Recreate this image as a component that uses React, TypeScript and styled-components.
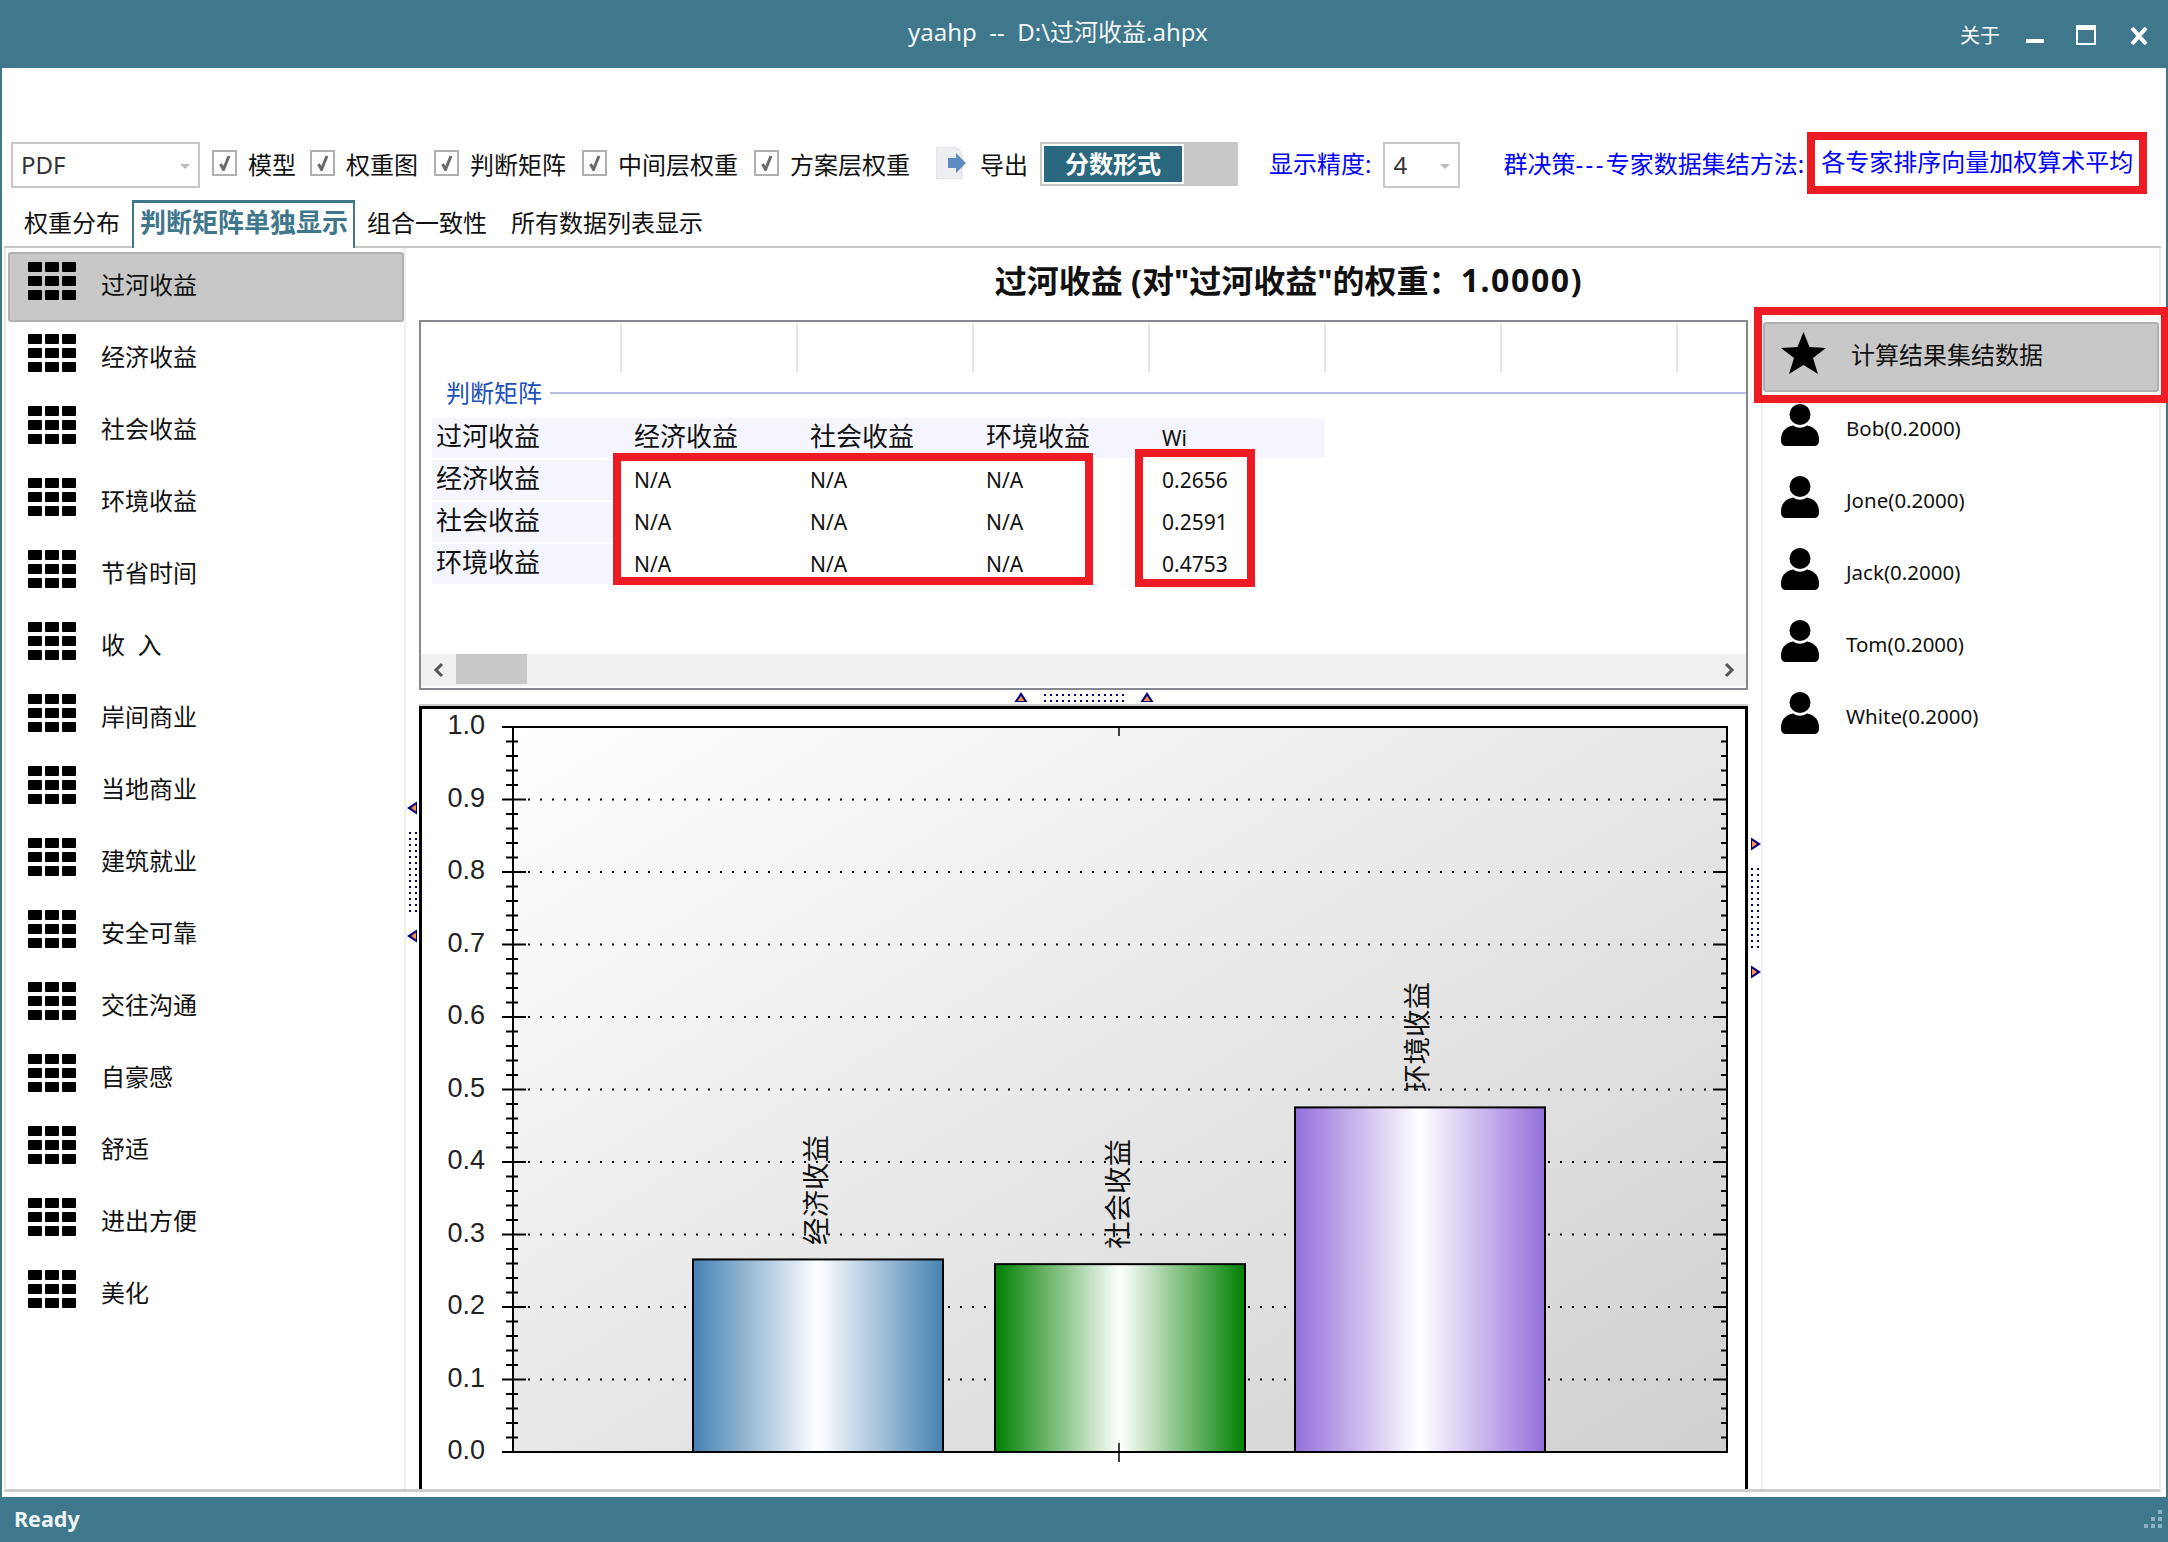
import styled, { createGlobalStyle } from "styled-components";

const TEAL = "#3f778c";
const RED = "#ed1c24";
const UI_FONT = `"Noto Sans", "Noto Sans CJK SC", sans-serif`;

const criteria = [
  "过河收益", "经济收益", "社会收益", "环境收益", "节省时间", "收  入", "岸间商业", "当地商业",
  "建筑就业", "安全可靠", "交往沟通", "自豪感", "舒适", "进出方便", "美化",
];
const experts = ["Bob(0.2000)", "Jone(0.2000)", "Jack(0.2000)", "Tom(0.2000)", "White(0.2000)"];
const matrix = [
  { name: "经济收益", wi: "0.2656" },
  { name: "社会收益", wi: "0.2591" },
  { name: "环境收益", wi: "0.4753" },
];
const checks = [
  { label: "模型", width: 98 },
  { label: "权重图", width: 124 },
  { label: "判断矩阵", width: 148 },
  { label: "中间层权重", width: 172 },
  { label: "方案层权重", width: 182 },
];
const bars = [
  { id: "blueBar", name: "经济收益", color: "#4682b4", x: 693, w: 250, value: 0.2656, labelX: 816, labelBottom: 1245 },
  { id: "greenBar", name: "社会收益", color: "#008000", x: 995, w: 250, value: 0.2591, labelX: 1118, labelBottom: 1249 },
  { id: "purpleBar", name: "环境收益", color: "#9370db", x: 1295, w: 250, value: 0.4753, labelX: 1417, labelBottom: 1092 },
];

const Y0 = 1452;
const yOf = (v: number) => Y0 - v * 725;

export default function App() {
  return (
    <Window>
      <GlobalStyle />
      <TitleBar>
        <TitleText>{"yaahp  --  D:\\过河收益.ahpx"}</TitleText>
        <WindowControls>
          <AboutLink>关于</AboutLink>
          <MinimizeGlyph />
          <MaximizeGlyph />
          <svg width="18" height="18" viewBox="0 0 18 18">
            <path d="M2 1 L16 17 M16 1 L2 17" stroke="#fff" strokeWidth="4" />
          </svg>
        </WindowControls>
      </TitleBar>

      <Body>
        <Toolbar>
          <Dropdown $width={189} $right={12}>
            PDF
            <DropArrow />
          </Dropdown>
          {checks.map((c) => (
            <CheckItem key={c.label} $width={c.width}>
              <CheckBox>
                <svg width="13" height="16" viewBox="0 0 13 16">
                  <path d="M2.5 9 L5.5 14.5 L11 1" fill="none" stroke="#6a6a6a" strokeWidth="3" />
                </svg>
              </CheckBox>
              {c.label}
            </CheckItem>
          ))}
          <ExportButton>
            <svg width="30" height="32" viewBox="0 0 30 32">
              <path d="M0 0 H20 L26 6 V32 H0 Z" fill="#eceef2" stroke="#dcdcdc" />
              <path d="M12 11 H20 V6 L30 16 L20 26 V21 H12 Z" fill="#5d8cc4" />
            </svg>
            导出
          </ExportButton>
          <ToggleTrack>
            <ToggleKnob>分数形式</ToggleKnob>
          </ToggleTrack>
          <BlueLabel $left={31}>显示精度:</BlueLabel>
          <Dropdown $width={77} $left={12}>
            4
            <DropArrow />
          </Dropdown>
          <BlueLabel $left={43}>
            群决策<Dashes>---</Dashes>专家数据集结方法:
          </BlueLabel>
          <MethodBox>各专家排序向量加权算术平均</MethodBox>
        </Toolbar>

        <TabBar>
          <Tab>权重分布</Tab>
          <ActiveTab>判断矩阵单独显示</ActiveTab>
          <Tab>组合一致性</Tab>
          <Tab>所有数据列表显示</Tab>
        </TabBar>

        <Panel>
          <Sidebar>
            {criteria.map((name, i) => (
              <NavRow key={name} $selected={i === 0} $inset={18}>
                <GridGlyph>
                  {Array.from({ length: 9 }).map((_, n) => (
                    <GridCell key={n} />
                  ))}
                </GridGlyph>
                <NavLabel $gap={25}>{name}</NavLabel>
              </NavRow>
            ))}
          </Sidebar>

          <SideSplitter>
            <Arrow dir="left" />
            <Grip rows={14} cols={2} />
            <Arrow dir="left" />
          </SideSplitter>

          <Main>
            <PanelTitle>
              过河收益 (对"过河收益"的权重：<WeightValue>1.0000)</WeightValue>
            </PanelTitle>
            <MainRow>
              <CenterColumn>
                <MatrixBox>
                  <HeaderStrip>
                    {Array.from({ length: 7 }).map((_, i) => (
                      <HeaderCell key={i} $first={i === 0} />
                    ))}
                  </HeaderStrip>
                  <SectionRow>
                    <SectionLabel>判断矩阵</SectionLabel>
                    <SectionRule />
                  </SectionRow>
                  <TableWrap>
                    <MatrixTable>
                      <HeadCell>过河收益</HeadCell>
                      {matrix.map((m) => (
                        <HeadCell key={m.name}>{m.name}</HeadCell>
                      ))}
                      <HeadCell $small>Wi</HeadCell>
                      {matrix.map((m) => (
                        <MatrixRow key={m.name}>
                          <RowHead>{m.name}</RowHead>
                          <ValueCell>N/A</ValueCell>
                          <ValueCell>N/A</ValueCell>
                          <ValueCell>N/A</ValueCell>
                          <ValueCell>{m.wi}</ValueCell>
                        </MatrixRow>
                      ))}
                    </MatrixTable>
                    <RedFrame $left={181} $top={35} $width={480} $height={132} />
                    <RedFrame $left={703} $top={31} $width={120} $height={138} />
                  </TableWrap>
                  <ScrollTrack>
                    <ScrollButton>
                      <svg width="12" height="16" viewBox="0 0 12 16">
                        <path d="M9 2 L3 8 L9 14" fill="none" stroke="#555" strokeWidth="3" />
                      </svg>
                    </ScrollButton>
                    <ScrollThumb />
                    <ScrollButton $end>
                      <svg width="12" height="16" viewBox="0 0 12 16">
                        <path d="M3 2 L9 8 L3 14" fill="none" stroke="#555" strokeWidth="3" />
                      </svg>
                    </ScrollButton>
                  </ScrollTrack>
                </MatrixBox>

                <HorizontalSplitter>
                  <Arrow dir="up" />
                  <Grip rows={2} cols={14} />
                  <Arrow dir="up" />
                </HorizontalSplitter>

                <ChartBox>
                  <WeightChart />
                </ChartBox>
              </CenterColumn>

              <SideSplitter>
                <Arrow dir="right" />
                <Grip rows={14} cols={2} />
                <Arrow dir="right" />
              </SideSplitter>

              <ExpertPanel>
                <RedFrame $left={-9} $top={-13} $width={415} $height={96} />
                <NavRow $selected $inset={16}>
                  <svg width="45" height="42" viewBox="0 0 45 42">
                    <path d="M22.5 0 L28.5 15 L45 16 L32 26 L37 42 L22.5 33 L8 42 L13 26 L0 16 L16.5 15 Z" fill="#000" />
                  </svg>
                  <NavLabel $gap={25}>计算结果集结数据</NavLabel>
                </NavRow>
                {experts.map((name) => (
                  <NavRow key={name} $inset={16}>
                    <svg width="38" height="42" viewBox="0 0 38 42">
                      <ellipse cx="19" cy="10.5" rx="10.5" ry="10.5" fill="#000" />
                      <path d="M0 36 C0 28 4 23 12 21.5 Q19 26 26 21.5 C34 23 38 28 38 36 Q38 42 33 42 H5 Q0 42 0 36 Z" fill="#000" />
                    </svg>
                    <NavLabel $gap={27} $latin>{name}</NavLabel>
                  </NavRow>
                ))}
              </ExpertPanel>
            </MainRow>
          </Main>
        </Panel>
      </Body>

      <StatusBar>
        Ready
        <svg width="20" height="20" viewBox="0 0 20 20">
          <path d="M14 1h4v4h-4z M7 8h4v4H7z M14 8h4v4h-4z M0 15h4v4H0z M7 15h4v4H7z M14 15h4v4h-4z" fill="#8fb1c0" />
        </svg>
      </StatusBar>
    </Window>
  );
}

function Arrow({ dir }: { dir: "left" | "right" | "up" }) {
  const rotate = dir === "left" ? -90 : dir === "right" ? 90 : 0;
  return (
    <svg width="14" height="14" viewBox="0 0 14 14">
      <g transform={`rotate(${rotate} 7 7)`}>
        <path d="M7 1 L13.5 11 H0.5 Z" fill="#000080" />
        <path d="M7 5 L10.5 10 H3.5 Z" fill="#ff9040" />
      </g>
    </svg>
  );
}

function Grip({ rows, cols }: { rows: number; cols: number }) {
  const dots = [];
  for (let r = 0; r < rows; r++) {
    for (let c = 0; c < cols; c++) {
      dots.push(<rect key={`${r}-${c}`} x={c * 6} y={r * 6} width="2" height="2" fill="#000080" />);
    }
  }
  return (
    <svg width={cols * 6 - 4} height={rows * 6 - 4}>
      {dots}
    </svg>
  );
}

function WeightChart() {
  const majors = [0, 0.1, 0.2, 0.3, 0.4, 0.5, 0.6, 0.7, 0.8, 0.9, 1];
  const minors = Array.from({ length: 51 }, (_, i) => i * 0.02).filter((_, i) => i % 5 !== 0);
  return (
    <svg width="1323" height="781" viewBox="422 709 1323 781">
      <defs>
        <linearGradient id="plotBg" x1="0" y1="0" x2="1" y2="1">
          <stop offset="0" stopColor="#ffffff" />
          <stop offset="1" stopColor="#d0d0d0" />
        </linearGradient>
        {bars.map((b) => (
          <linearGradient key={b.id} id={b.id} x1="0" x2="1" y1="0" y2="0">
            <stop offset="0" stopColor={b.color} />
            <stop offset="0.5" stopColor="#ffffff" />
            <stop offset="1" stopColor={b.color} />
          </linearGradient>
        ))}
      </defs>
      <rect x="513" y="727" width="1214" height="725" fill="url(#plotBg)" stroke="#000" strokeWidth="2" />
      {majors.slice(1, -1).map((v) => (
        <line key={v} x1="528" x2="1713" y1={yOf(v)} y2={yOf(v)} stroke="#000" strokeWidth="2" strokeDasharray="2 10" />
      ))}
      {majors.map((v) => (
        <g key={v}>
          <line x1="502" x2="526" y1={yOf(v)} y2={yOf(v)} stroke="#000" strokeWidth="2" />
          <line x1="1713" x2="1727" y1={yOf(v)} y2={yOf(v)} stroke="#000" strokeWidth="2" />
          <TickLabel x="485" y={yOf(v) + 7} textAnchor="end">
            {v.toFixed(1)}
          </TickLabel>
        </g>
      ))}
      {minors.map((v) => (
        <g key={v}>
          <line x1="506" x2="518" y1={yOf(v)} y2={yOf(v)} stroke="#000" strokeWidth="2" />
          <line x1="1721" x2="1727" y1={yOf(v)} y2={yOf(v)} stroke="#000" strokeWidth="2" />
        </g>
      ))}
      {bars.map((b) => (
        <g key={b.id}>
          <rect
            x={b.x}
            y={yOf(b.value)}
            width={b.w}
            height={Y0 - yOf(b.value)}
            fill={`url(#${b.id})`}
            stroke="#000"
            strokeWidth="2"
          />
          <BarLabel transform={`translate(${b.labelX + 10} ${b.labelBottom}) rotate(-90)`}>{b.name}</BarLabel>
        </g>
      ))}
      <line x1="1119" x2="1119" y1="727" y2="736" stroke="#000" strokeWidth="1.5" />
      <line x1="1119" x2="1119" y1="1443" y2="1462" stroke="#000" strokeWidth="1.5" />
    </svg>
  );
}

const GlobalStyle = createGlobalStyle`
  html, body {
    margin: 0;
    padding: 0;
    background: #fff;
  }
  * {
    box-sizing: border-box;
  }
  svg {
    display: block;
    flex-shrink: 0;
  }
`;

const Window = styled.div`
  width: 2168px;
  height: 1542px;
  display: flex;
  flex-direction: column;
  overflow: hidden;
  background: #fff;
  color: #111;
  font-family: ${UI_FONT};
  font-size: 24px;
`;

const TitleBar = styled.header`
  height: 68px;
  flex-shrink: 0;
  display: flex;
  align-items: center;
  padding: 0 20px 4px 908px;
  background: ${TEAL};
  color: #f2f6f8;
`;

const TitleText = styled.div`
  font-size: 24px;
  line-height: 1;
  white-space: pre;
`;

const WindowControls = styled.div`
  margin-left: auto;
  display: flex;
  align-items: flex-end;
  height: 24px;
  margin-top: 2px;
`;

const AboutLink = styled.span`
  font-size: 20px;
  line-height: 24px;
  margin-right: 26px;
  margin-bottom: -3px;
  color: #fff;
`;

const MinimizeGlyph = styled.span`
  width: 18px;
  height: 4px;
  margin-right: 32px;
  margin-bottom: 2px;
  background: #fff;
`;

const MaximizeGlyph = styled.span`
  width: 20px;
  height: 20px;
  margin-right: 34px;
  border: 2px solid #fff;
  border-top-width: 5px;
`;

const Body = styled.main`
  flex: 1;
  min-height: 0;
  display: flex;
  flex-direction: column;
  border-left: 2px solid ${TEAL};
  border-right: 2px solid ${TEAL};
`;

const Toolbar = styled.div`
  height: 46px;
  flex-shrink: 0;
  margin-top: 74px;
  padding-left: 9px;
  display: flex;
  align-items: center;
  white-space: nowrap;

  & > * {
    flex-shrink: 0;
  }
`;

const Dropdown = styled.div<{ $width: number; $left?: number; $right?: number }>`
  position: relative;
  width: ${(p) => p.$width}px;
  height: 46px;
  margin-left: ${(p) => p.$left ?? 0}px;
  margin-right: ${(p) => p.$right ?? 0}px;
  padding-left: 8px;
  border: 2px solid #c8c8c8;
  line-height: 42px;
  color: #333;
`;

const DropArrow = styled.span`
  position: absolute;
  right: 8px;
  top: 20px;
  border-left: 5px solid transparent;
  border-right: 5px solid transparent;
  border-top: 5px solid #bbb;
`;

const CheckItem = styled.label<{ $width: number }>`
  width: ${(p) => p.$width}px;
  margin-top: -4px;
  display: flex;
  align-items: center;
  gap: 11px;
`;

const CheckBox = styled.span`
  width: 25px;
  height: 26px;
  display: flex;
  align-items: center;
  justify-content: center;
  border: 2px solid #b0b0b0;
`;

const ExportButton = styled.div`
  width: 104px;
  margin-top: -4px;
  display: flex;
  align-items: center;
  gap: 14px;
`;

const ToggleTrack = styled.div`
  width: 198px;
  height: 44px;
  margin-top: -2px;
  padding: 2px;
  background: #c8c8c8;
`;

const ToggleKnob = styled.div`
  width: 142px;
  height: 40px;
  display: flex;
  align-items: center;
  justify-content: center;
  padding-bottom: 4px;
  border: 2px solid #fff;
  background: #2a6880;
  color: #fff;
  font-weight: 700;
`;

const BlueLabel = styled.span<{ $left: number }>`
  margin-left: ${(p) => p.$left}px;
  margin-top: -5px;
  color: #0000ff;
`;

const Dashes = styled.span`
  letter-spacing: 2.4px;
`;

const MethodBox = styled.div`
  width: 340px;
  height: 62px;
  margin-left: 3px;
  margin-top: -4px;
  padding: 0 0 5px 6px;
  display: flex;
  align-items: center;
  border: 8px solid ${RED};
  color: #0000ff;
`;

const TabBar = styled.nav`
  height: 48px;
  flex-shrink: 0;
  margin: 12px 5px 0 2px;
  padding-left: 8px;
  display: flex;
  border-bottom: 2px solid #c8c8c8;
`;

const Tab = styled.div`
  height: 46px;
  padding: 0 12px;
  line-height: 46px;
`;

const ActiveTab = styled.div`
  height: 48px;
  width: 223px;
  padding-left: 6px;
  border: 2px solid ${TEAL};
  border-top-width: 3px;
  border-bottom: 0;
  background: #fff;
  color: ${TEAL};
  font-size: 26px;
  font-weight: 700;
  line-height: 38px;
  white-space: nowrap;
`;

const Panel = styled.section`
  flex: 1;
  min-height: 0;
  margin: 0 5px 5px 2px;
  display: flex;
  border-left: 2px solid #e6e6e6;
  border-right: 2px solid #eeeeee;
  border-bottom: 3px solid #cccccc;
`;

const Sidebar = styled.aside`
  width: 400px;
  flex-shrink: 0;
  padding: 4px 0 0 2px;
  border-right: 2px solid #f0f0f0;
`;

const NavRow = styled.div<{ $selected?: boolean; $inset: number }>`
  height: 70px;
  margin-bottom: 2px;
  padding: 8px 0 0 ${(p) => p.$inset}px;
  display: flex;
  align-items: flex-start;
  border: 2px solid ${(p) => (p.$selected ? "#b0b0b0" : "transparent")};
  border-radius: 3px;
  background: ${(p) => (p.$selected ? "#c8c8c8" : "transparent")};
`;

const GridGlyph = styled.span`
  width: 48px;
  flex-shrink: 0;
  display: grid;
  grid-template-columns: repeat(3, 14px);
  grid-auto-rows: 10px;
  column-gap: 3px;
  row-gap: 4px;
`;

const GridCell = styled.span`
  background: #000;
  border-radius: 1px;
`;

const NavLabel = styled.span<{ $gap: number; $latin?: boolean }>`
  margin-left: ${(p) => p.$gap}px;
  margin-top: ${(p) => (p.$latin ? "-7px" : "-8px")};
  font-size: ${(p) => (p.$latin ? "20.5px" : "24px")};
  line-height: 62px;
  white-space: pre;
`;

const SideSplitter = styled.div`
  width: 13px;
  flex-shrink: 0;
  padding-top: 6px;
  display: flex;
  flex-direction: column;
  align-items: center;
  justify-content: center;
  gap: 17px;
`;

const Main = styled.div`
  flex: 1;
  min-width: 0;
  display: flex;
  flex-direction: column;
`;

const PanelTitle = styled.h1`
  height: 72px;
  flex-shrink: 0;
  margin: 0;
  padding-bottom: 10px;
  display: flex;
  align-items: center;
  justify-content: center;
  font-size: 32px;
  font-weight: 700;
  white-space: pre;
`;

const WeightValue = styled.span`
  letter-spacing: 1.6px;
`;

const MainRow = styled.div`
  flex: 1;
  min-height: 0;
  display: flex;
`;

const CenterColumn = styled.div`
  width: 1329px;
  flex-shrink: 0;
  display: flex;
  flex-direction: column;
`;

const MatrixBox = styled.div`
  height: 370px;
  flex-shrink: 0;
  padding-top: 2px;
  display: flex;
  flex-direction: column;
  border: 2px solid #85898f;
`;

const HeaderStrip = styled.div`
  height: 48px;
  flex-shrink: 0;
  display: flex;
  overflow: hidden;
`;

const HeaderCell = styled.div<{ $first?: boolean }>`
  width: ${(p) => (p.$first ? 201 : 176)}px;
  flex-shrink: 0;
  border-right: 2px solid #e4e4e4;
`;

const SectionRow = styled.div`
  height: 42px;
  flex-shrink: 0;
  padding-left: 25px;
  display: flex;
  align-items: center;
  gap: 8px;
`;

const SectionLabel = styled.span`
  color: #2050b8;
  font-size: 24px;
  line-height: 1;
`;

const SectionRule = styled.span`
  flex: 1;
  height: 2px;
  background: #b4c0de;
`;

const TableWrap = styled.div`
  position: relative;
  margin: 4px 0 0 11px;
`;

const MatrixTable = styled.div`
  display: grid;
  grid-template-columns: 198px 176px 176px 176px 167px;
  grid-auto-rows: 40px;
  row-gap: 2px;
  width: 893px;
`;

const MatrixRow = styled.div`
  display: contents;
`;

const HeadCell = styled.div<{ $small?: boolean }>`
  padding-left: 4px;
  background: #f4f5ff;
  font-size: ${(p) => (p.$small ? "21px" : "26px")};
  line-height: ${(p) => (p.$small ? "40px" : "36px")};
`;

const RowHead = styled.div`
  margin-right: 10px;
  padding-left: 4px;
  background: #f4f5ff;
  font-size: 26px;
  line-height: 36px;
`;

const ValueCell = styled.div`
  padding-left: 4px;
  font-size: 21px;
  line-height: 40px;
`;

const RedFrame = styled.div<{ $left: number; $top: number; $width: number; $height: number }>`
  position: absolute;
  left: ${(p) => p.$left}px;
  top: ${(p) => p.$top}px;
  width: ${(p) => p.$width}px;
  height: ${(p) => p.$height}px;
  border: 8px solid ${RED};
  pointer-events: none;
`;

const ScrollTrack = styled.div`
  height: 32px;
  flex-shrink: 0;
  margin-top: auto;
  margin-bottom: 2px;
  display: flex;
  align-items: center;
  background: #f0f0f0;
`;

const ScrollButton = styled.div<{ $end?: boolean }>`
  width: 35px;
  display: flex;
  justify-content: center;
  margin-left: ${(p) => (p.$end ? "auto" : "0")};
`;

const ScrollThumb = styled.div`
  width: 71px;
  height: 30px;
  align-self: flex-start;
  background: #c8c8c8;
`;

const HorizontalSplitter = styled.div`
  height: 16px;
  flex-shrink: 0;
  display: flex;
  align-items: center;
  justify-content: center;
  gap: 16px;
`;

const ChartBox = styled.div`
  flex: 1;
  min-height: 0;
  overflow: hidden;
  border: 3px solid #000;
  border-bottom: 0;
  box-shadow: 0 -2px 0 #cccccc;
`;

const TickLabel = styled.text`
  font-family: "Liberation Sans", Arial, sans-serif;
  font-size: 27px;
  fill: #222;
`;

const BarLabel = styled.text`
  font-family: "Noto Sans CJK SC", sans-serif;
  font-size: 27.5px;
  fill: #111;
`;

const ExpertPanel = styled.div`
  position: relative;
  flex: 1;
  min-width: 0;
  padding: 2px 0 0 0;
  border-left: 2px solid #f0f0f0;
`;

const StatusBar = styled.footer`
  height: 45px;
  flex-shrink: 0;
  display: flex;
  align-items: center;
  justify-content: space-between;
  padding: 0 4px 2px 14px;
  background: ${TEAL};
  color: #eef3f5;
  font-size: 21.5px;
  font-weight: 700;
`;
